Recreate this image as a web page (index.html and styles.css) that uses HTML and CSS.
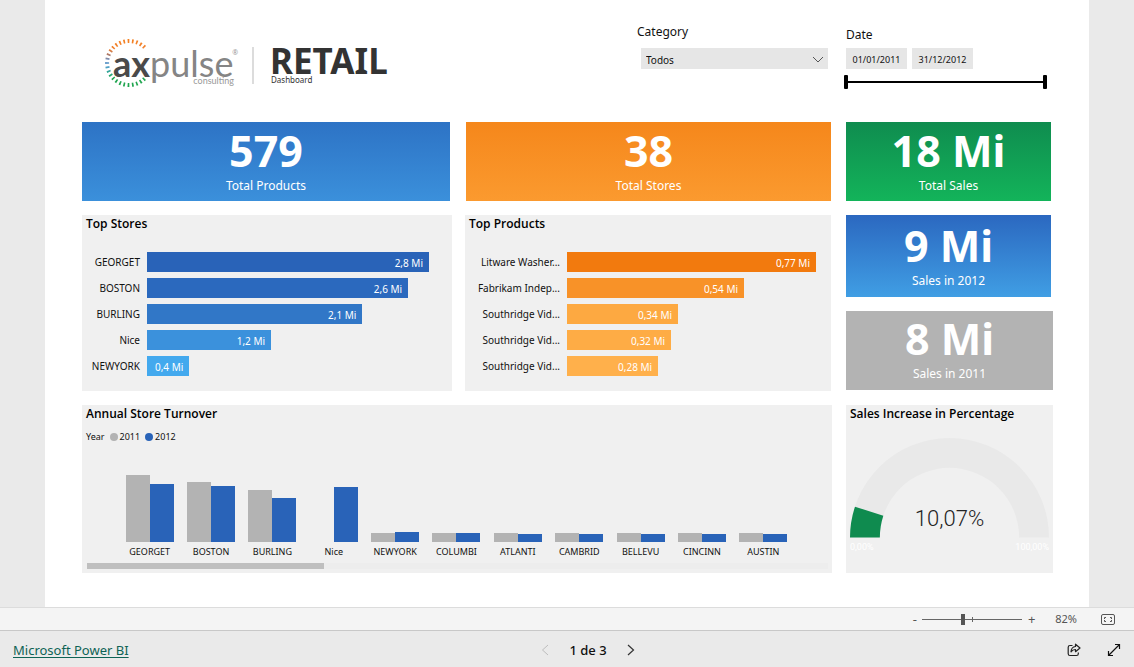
FILE: index.html
```html
<!DOCTYPE html>
<html lang="en">
<head>
<meta charset="utf-8">
<title>Retail Dashboard</title>
<link rel="stylesheet" href="styles.css">
</head>
<body>
<main class="stage">
  <div class="report">
    <header class="head">
      <div class="brand">
        <div class="logo">
          <svg class="logo-ring" viewBox="0 0 50 50" aria-hidden="true">
            <defs>
              <linearGradient id="ring" gradientUnits="userSpaceOnUse" x1="0" y1="0" x2="0" y2="50">
                <stop offset="0" stop-color="#f58220"/><stop offset=".22" stop-color="#f08030"/>
                <stop offset=".34" stop-color="#a8776a"/><stop offset=".45" stop-color="#6d94c8"/>
                <stop offset=".58" stop-color="#4f9fc8"/><stop offset=".7" stop-color="#2aa88a"/>
                <stop offset=".8" stop-color="#22a651"/><stop offset="1" stop-color="#22a651"/>
              </linearGradient>
            </defs>
            <path d="M40.600 9.400A22 22 0 1 0 40.600 40.600" fill="none" stroke="url(#ring)" stroke-width="4" pathLength="244" stroke-dasharray="4 6"/>
          </svg>
          <div class="logo-text">
            <span class="wordmark"><b>ax</b>pulse</span><span class="reg">®</span>
            <span class="tagline">consulting</span>
          </div>
        </div>
        <div class="title">
          <h1>RETAIL</h1>
          <p>Dashboard</p>
        </div>
      </div>
      <div class="category">
        <label for="category">Category</label>
        <div class="select-wrap">
          <select id="category"><option>Todos</option></select>
          <svg viewBox="0 0 12 8" aria-hidden="true"><path d="M1 1l5 5 5-5" fill="none" stroke="#555"/></svg>
        </div>
      </div>
    </header>

    <div class="date">
      <label for="from">Date</label>
      <div class="date-fields">
        <input type="text" id="from" value="01/01/2011">
        <input type="text" value="31/12/2012" aria-label="End date">
      </div>
      <div class="range">
        <input type="range" value="0" aria-label="Range start">
        <input type="range" class="range-end" value="100" aria-label="Range end">
      </div>
    </div>

    <div class="kpi-row">
      <section class="kpi blue"><strong>579</strong><span>Total Products</span></section>
      <section class="kpi orange"><strong>38</strong><span>Total Stores</span></section>
    </div>
    <section class="kpi green"><strong>18 Mi</strong><span>Total Sales</span></section>

    <div class="panel-row">
      <section class="panel">
        <h2>Top Stores</h2>
        <div class="hbars stores">
          <span>GEORGET</span><div><i class="s1" style="width:100%">2,8 Mi</i></div>
          <span>BOSTON</span><div><i class="s2" style="width:92.6%">2,6 Mi</i></div>
          <span>BURLING</span><div><i class="s3" style="width:76.4%">2,1 Mi</i></div>
          <span>Nice</span><div><i class="s4" style="width:44%">1,2 Mi</i></div>
          <span>NEWYORK</span><div><i class="s5" style="width:15%">0,4 Mi</i></div>
        </div>
      </section>
      <section class="panel">
        <h2>Top Products</h2>
        <div class="hbars products">
          <span>Litware Washer...</span><div><i class="p1" style="width:100%">0,77 Mi</i></div>
          <span>Fabrikam Indep...</span><div><i class="p2" style="width:71.1%">0,54 Mi</i></div>
          <span>Southridge Vid...</span><div><i class="p3" style="width:44.6%">0,34 Mi</i></div>
          <span>Southridge Vid...</span><div><i class="p4" style="width:41.8%">0,32 Mi</i></div>
          <span>Southridge Vid...</span><div><i class="p5" style="width:36.6%">0,28 Mi</i></div>
        </div>
      </section>
    </div>
    <div class="kpi-stack">
      <section class="kpi blue-deep"><strong>9 Mi</strong><span>Sales in 2012</span></section>
      <section class="kpi gray"><strong>8 Mi</strong><span>Sales in 2011</span></section>
    </div>

    <section class="panel turnover">
      <h2>Annual Store Turnover</h2>
      <div class="legend"><span>Year</span><span class="key k2011">2011</span><span class="key k2012">2012</span></div>
      <div class="columns">
        <figure><div><i style="height:67px"></i><i style="height:58px"></i></div><figcaption>GEORGET</figcaption></figure>
        <figure><div><i style="height:60px"></i><i style="height:56px"></i></div><figcaption>BOSTON</figcaption></figure>
        <figure><div><i style="height:52px"></i><i style="height:44px"></i></div><figcaption>BURLING</figcaption></figure>
        <figure><div><i style="height:0"></i><i style="height:55px"></i></div><figcaption>Nice</figcaption></figure>
        <figure><div><i style="height:9px"></i><i style="height:10px"></i></div><figcaption>NEWYORK</figcaption></figure>
        <figure><div><i style="height:9px"></i><i style="height:9px"></i></div><figcaption>COLUMBI</figcaption></figure>
        <figure><div><i style="height:9px"></i><i style="height:8px"></i></div><figcaption>ATLANTI</figcaption></figure>
        <figure><div><i style="height:9px"></i><i style="height:8px"></i></div><figcaption>CAMBRID</figcaption></figure>
        <figure><div><i style="height:9px"></i><i style="height:8px"></i></div><figcaption>BELLEVU</figcaption></figure>
        <figure><div><i style="height:9px"></i><i style="height:8px"></i></div><figcaption>CINCINN</figcaption></figure>
        <figure><div><i style="height:9px"></i><i style="height:8px"></i></div><figcaption>AUSTIN</figcaption></figure>
      </div>
      <div class="scroll"><div style="width:32%"></div></div>
    </section>

    <section class="panel gauge">
      <h2>Sales Increase in Percentage</h2>
      <div class="dial">
        <svg viewBox="0 0 200 100" aria-hidden="true">
          <path d="M0 100A100 100 0 0 1 200 100H170A70 70 0 0 0 30 100Z" fill="#e9e9e9"/>
          <path d="M0 100A100 100 0 0 1 5 69L33.500 78.200A70 70 0 0 0 30 100Z" fill="#0f8b4f"/>
        </svg>
        <output>10,07%</output>
      </div>
      <div class="ends"><span>0,00%</span><span>100,00%</span></div>
    </section>
  </div>
</main>

<div class="zoombar">
  <button type="button" aria-label="Zoom out">-</button>
  <div class="zoom-track"><input type="range" value="40" aria-label="Zoom"></div>
  <button type="button" aria-label="Zoom in">+</button>
  <span class="zoom-value">82%</span>
  <button type="button" class="fit" aria-label="Fit to page">
    <svg width="14" height="11" viewBox="0 0 14 11" fill="none" stroke="#555"><rect x=".5" y=".5" width="13" height="10" rx="1.500"/><path d="M3.500 5V3.500H5M9 3.500h1.500V5M3.500 6v1.500H5M9 7.500h1.500V6"/></svg>
  </button>
</div>

<footer class="foot">
  <div class="foot-left"><a href="#">Microsoft Power BI</a></div>
  <nav class="pager">
    <button type="button" disabled aria-label="Previous page"><svg width="8" height="12" viewBox="0 0 8 12"><path d="M7 1L1.500 6L7 11" fill="none" stroke="#bdbdbd"/></svg></button>
    <span>1 de 3</span>
    <button type="button" aria-label="Next page"><svg width="8" height="12" viewBox="0 0 8 12"><path d="M1 1l5.500 5L1 11" fill="none" stroke="#333" stroke-width="1.200"/></svg></button>
  </nav>
  <div class="actions">
    <button type="button" aria-label="Share"><svg width="14" height="14" viewBox="0 0 14 14" fill="none" stroke="#222" stroke-width="1.200" stroke-linejoin="round"><path d="M5.500 2.500H3A1.800 1.800 0 0 0 1.200 4.300V10.700A1.800 1.800 0 0 0 3 12.500H9.500A1.800 1.800 0 0 0 11.300 10.700V9.500"/><path d="M8.500 1.200L13 5L8.500 8.700V6.500C6.500 6.400 5.200 7.100 4 8.800C4.200 5.800 5.800 3.700 8.500 3.500Z"/></svg></button>
    <button type="button" aria-label="Full screen"><svg width="14" height="14" viewBox="0 0 14 14" fill="none" stroke="#111" stroke-width="1.200"><path d="M1.500 12.500L12.500 1.500M8 1.500h4.500V6M1.500 8v4.500H6"/></svg></button>
  </div>
</footer>
</body>
</html>
```
FILE: styles.css
```css
* { box-sizing: border-box; }
body {
  margin: 0;
  min-height: 100vh;
  display: flex;
  flex-direction: column;
  font-family: "Noto Sans", "Open Sans", sans-serif;
  font-size: 12px;
  line-height: 16px;
  color: #111;
  background: #eaeaea;
}
h1, h2, p, figure { margin: 0; }
i { font-style: normal; }
button { border: 0; padding: 0; background: none; font: inherit; color: inherit; }
svg { display: block; }
select, input { font: inherit; color: inherit; }

.stage { flex: 1; display: grid; padding: 0 45px; background: #eaeaea; }
.report {
  padding: 0 36px 34px 37px;
  background: #fff;
  display: grid;
  grid-template-columns: 750fr 207fr;
  grid-template-rows: 108px auto auto 1fr;
  gap: 14px;
}

.head { display: flex; justify-content: space-between; padding: 24px 4px 0 22px; }
.brand { display: flex; align-items: flex-start; padding-top: 14px; }
.logo { display: flex; position: relative; width: 150px; height: 50px; }
.logo::after { content: ""; position: absolute; right: 0; top: 9px; width: 2px; height: 37px; background: #dcdcdc; }
.logo-ring { width: 50px; height: 50px; }
.logo-text { position: absolute; left: 9px; top: 3px; width: 125px; }
.wordmark { display: block; font: 36px/44px Lato, sans-serif; color: #858585; }
.wordmark b { color: #4a4a4a; }
.reg { position: absolute; right: 0; top: 8px; font-size: 7px; line-height: 8px; color: #999; }
.tagline { position: absolute; right: 4px; top: 34px; font: 9px/12px Lato, sans-serif; color: #999; }
.title { padding-left: 16px; }
.title h1 { font-size: 35px; line-height: 35px; padding-top: 5px; color: #333; }
.title p { font-size: 8px; line-height: 8px; color: #333; margin-top: -2px; padding-left: 1px; }

.category { width: 191px; }
.category label { display: block; }
.select-wrap { position: relative; margin: 8px 0 0 4px; }
.select-wrap select {
  display: block; width: 100%; height: 21px; appearance: none;
  border: 0; border-radius: 0; padding: 2px 5px 0; background: #e6e6e6; font-size: 10px;
}
.select-wrap svg { position: absolute; right: 4px; top: 8px; width: 12px; height: 8px; pointer-events: none; }

.date { padding-top: 27px; }
.date label { display: block; }
.date-fields { display: flex; gap: 5px; margin-top: 5px; }
.date-fields input { width: 61px; height: 21px; border: 0; padding: 2px 0 0; text-align: center; background: #e6e6e6; font-size: 9px; }
.range { position: relative; height: 14px; width: 203px; margin: 6px 0 0 -2px; }
.range input { position: absolute; inset: 0; width: 100%; height: 14px; margin: 0; appearance: none; background: linear-gradient(#000, #000) center / 100% 2px no-repeat; }
.range .range-end { background: none; }
.range input::-webkit-slider-thumb { appearance: none; width: 4px; height: 14px; border-radius: 1px; background: #000; }

.kpi-row { display: grid; grid-template-columns: 368fr 365fr; gap: 16px; padding-right: 1px; }
.kpi { display: flex; flex-direction: column; align-items: center; height: 79px; padding-top: 4px; color: #fff; font-size: 12px; }
.kpi strong { font-size: 43px; line-height: 50px; }
.kpi span { line-height: 20px; }
.blue { background: linear-gradient(#2d73c5, #3b90db); }
.orange { background: linear-gradient(#f5871b, #fb9a2f); }
.green { background: linear-gradient(#0f8c4f, #13b45a); margin-right: 2px; }
.blue-deep { background: linear-gradient(#2b68c0, #409ee4); margin-right: 2px; }
.gray { background: #b3b3b3; }
.kpi-stack { display: flex; flex-direction: column; gap: 14px; }
.kpi-stack .blue-deep { height: 82px; padding-top: 6px; }
.kpi-stack .gray { padding-top: 3px; }

.panel-row { display: grid; grid-template-columns: 370fr 366fr; gap: 13px; padding-right: 1px; }
.panel { background: #f0f0f0; padding: 1px 4px 0; }
.panel h2 { font: 600 12px/16px "Open Sans", "Noto Sans", sans-serif; color: #000; }
.panel-row .panel { height: 176px; }
.hbars { display: grid; gap: 6px 7px; margin-top: 20px; font-size: 10px; }
.hbars > * { height: 20px; line-height: 20px; }
.hbars > span { text-align: right; white-space: nowrap; }
.stores { grid-template-columns: 54px 1fr; padding-right: 19px; }
.products { grid-template-columns: 91px 1fr; padding-right: 11px; }
.hbars i { display: block; padding-right: 6px; text-align: right; color: #fff; font-size: 10px; line-height: 22px; height: 20px; }
.s1 { background: #2963b8; } .s2 { background: #2b69be; } .s3 { background: #3177c7; }
.s4 { background: #3b91dc; } .s5 { background: #43a9ee; }
.p1 { background: #f27a0e; } .p2 { background: #f89228; } .p3 { background: #fda941; }
.p4 { background: #feac45; } .p5 { background: #ffb04b; }

.turnover { display: flex; flex-direction: column; padding-bottom: 4px; }
.legend { display: flex; gap: 5px; margin-top: 8px; font-size: 9px; line-height: 14px; }
.key { display: flex; align-items: center; gap: 2px; }
.key::before { content: ""; width: 8px; height: 8px; border-radius: 50%; background: #b3b3b3; }
.k2012::before { background: #2963b8; }
.columns { flex: 1; display: grid; grid-template-columns: repeat(11, 1fr); align-items: end; padding: 0 34px 4px 33px; }
.columns div { display: flex; justify-content: center; align-items: flex-end; }
.columns i { width: 24px; background: #b3b3b3; }
.columns i + i { background: #2963b8; }
.columns figcaption { text-align: center; font-size: 9px; line-height: 14px; padding-top: 3px; }
.scroll { height: 6px; margin-left: 1px; background: #ededed; }
.scroll div { height: 6px; background: #bfbfbf; }

.dial { position: relative; margin-top: 16px; }
.dial svg { width: 100%; }
.dial output { position: absolute; left: 0; right: 0; bottom: 5px; text-align: center; font: 300 22px/28px Roboto, sans-serif; color: #222; }
.ends { display: flex; justify-content: space-between; font: 9px/12px Roboto, sans-serif; padding-top: 3px; color: #fff; }

.zoombar { display: flex; justify-content: flex-end; align-items: center; height: 23px; padding-right: 19px; background: #f4f4f4; border-top: 1px solid #dcdcdc; color: #555; }
.zoombar button { width: 9px; text-align: center; font-size: 13px; }
.zoom-track { width: 100px; height: 12px; margin: 0 5px 0 3px; background: linear-gradient(#666, #666) 50px 4px / 1px 5px no-repeat; display: flex; }
.zoom-track input { width: 100%; height: 12px; margin: 0; appearance: none; background: linear-gradient(#666, #666) center / 100% 1px no-repeat; }
.zoom-track input::-webkit-slider-thumb { appearance: none; width: 4px; height: 11px; background: #555; }
.zoom-value { margin: 0 24px 0 19px; font-size: 11px; }
.zoombar .fit { width: 14px; }

.foot { display: grid; grid-template-columns: 1fr auto 1fr; align-items: center; height: 37px; padding: 2px 13px 0 13px; border-top: 1px solid #c8c8c8; background: #eaeaea; }
.foot a { color: #0e6355; font-size: 13px; text-underline-offset: 2px; }
.pager { display: flex; align-items: center; gap: 20px; padding-left: 42px; }
.pager span { font-size: 13px; font-weight: 500; color: #111; }
.actions { display: flex; justify-content: flex-end; gap: 26px; }
```
